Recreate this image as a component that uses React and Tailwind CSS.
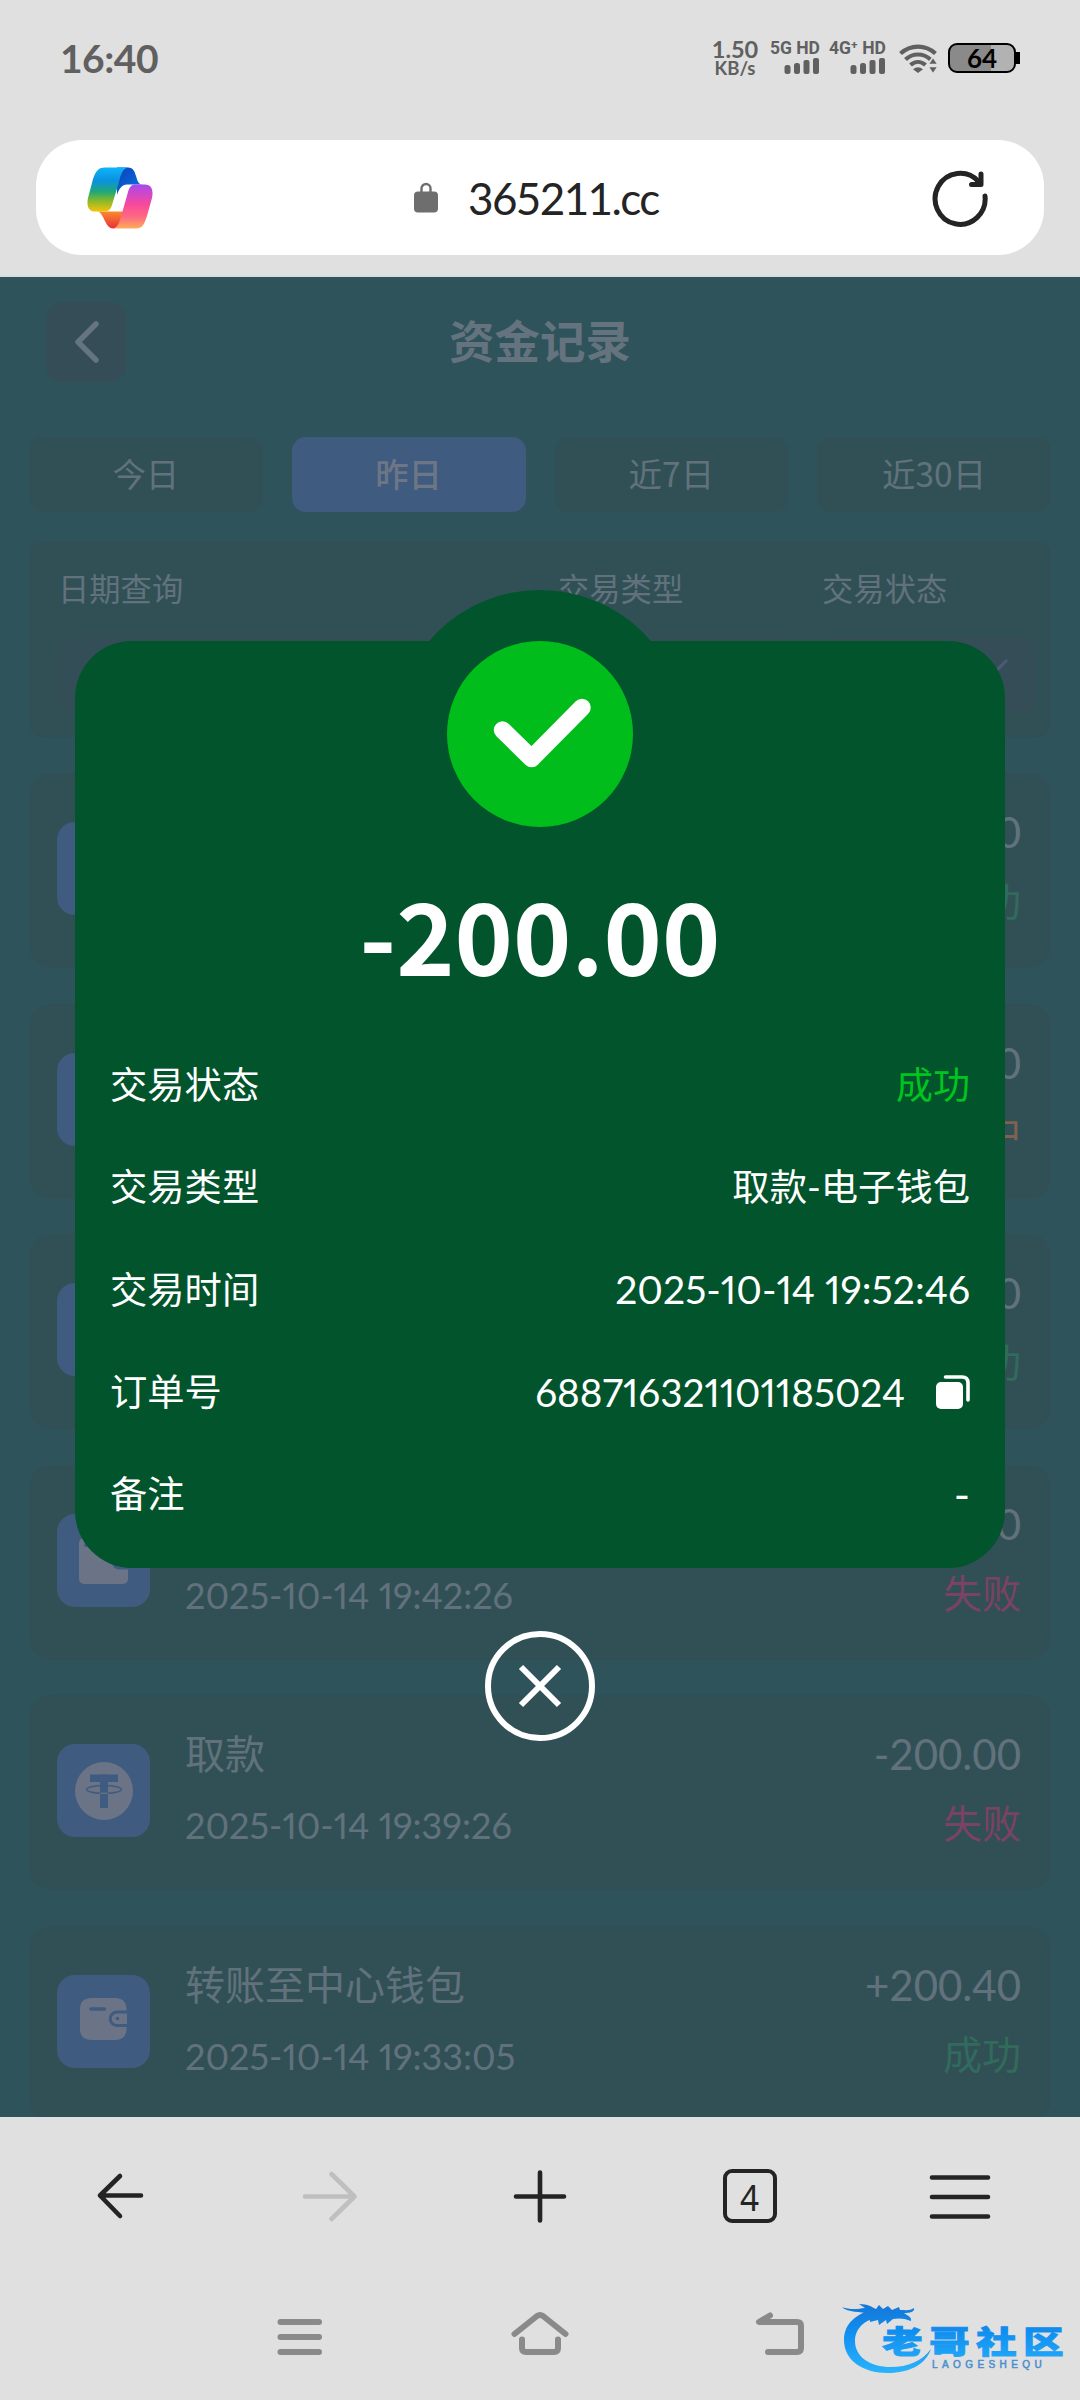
const tabs = [
  { label: '今日', active: false },
  { label: '昨日', active: true },
  { label: '近7日', active: false },
  { label: '近30日', active: false },
];

const records = [
  { id: 1, icon: 'usdt', title: '取款', time: '2025-10-14 19:52:46', amount: '-200.00', status: '成功' },
  { id: 2, icon: 'usdt', title: '取款', time: '2025-10-14 19:49:12', amount: '-200.00', status: '处理中' },
  { id: 3, icon: 'card', title: '转账', time: '2025-10-14 19:45:31', amount: '+200.00', status: '成功' },
  { id: 4, icon: 'card', title: '取款', time: '2025-10-14 19:42:26', amount: '-200.00', status: '失败' },
  { id: 5, icon: 'usdt', title: '取款', time: '2025-10-14 19:39:26', amount: '-200.00', status: '失败' },
  { id: 6, icon: 'wallet', title: '转账至中心钱包', time: '2025-10-14 19:33:05', amount: '+200.40', status: '成功' },
];

const statusColors = {
  成功: 'text-[#316b5c]',
  失败: 'text-[#7a4263]',
  处理中: 'text-[#7d6250]',
};

const details = [
  { label: '交易状态', value: '成功', size: 'text-[37px]', color: 'text-[#00c41f]' },
  { label: '交易类型', value: '取款-电子钱包', size: 'text-[37.3px]' },
  { label: '交易时间', value: '2025-10-14 19:52:46', size: 'text-[39px]' },
  { label: '订单号', value: '688716321101185024', size: 'text-[38.7px]', copy: true },
  { label: '备注', value: '-', size: 'text-[44px]' },
];

const SignalBars = () => (
  <svg className="w-[36px] h-[16px]" viewBox="0 0 36 16" fill="#606060">
    <rect x="0.5" y="7" width="6" height="9" rx="2.5" />
    <rect x="10" y="5" width="6" height="11" rx="2.5" />
    <rect x="19.5" y="2" width="6" height="14" rx="2" />
    <rect x="29" y="0" width="6" height="16" rx="2" />
  </svg>
);

const WifiIcon = () => (
  <svg className="w-[38px] h-[30px] ml-[13px] mt-[43px]" viewBox="0 0 38 30">
    <g fill="none" stroke="#606060" strokeWidth="4.2">
      <path d="M1.5 10.5 C11.5 1.2 26.5 1.2 36.5 10.5" />
      <path d="M6.5 16.5 C13.5 9.8 24.5 9.8 31.5 16.5" />
      <path d="M11.5 22 C16 18 22 18 26.5 22" />
    </g>
    <path d="M14 26.2 Q19 22.5 24 26.2 L19 30 Z" fill="#606060" />
    <path d="M34 14 L39 21.5 H29 Z M34 31 L39 23.5 H29 Z" fill="#606060" stroke="#e0e0e0" strokeWidth="1.5" />
  </svg>
);

const StatusBar = () => (
  <div className="flex items-start h-[140px] text-[#606060]">
    <span className="ml-[60px] mt-[34px] text-[39px] leading-[48px] font-bold tracking-[-0.5px]">16:40</span>
    <div className="ml-auto w-[46px] mt-[38px] flex flex-col items-center font-bold">
      <span className="text-[23.5px] leading-[23px]">1.50</span>
      <span className="text-[18.5px] leading-[15px]">KB/s</span>
    </div>
    <div className="ml-[12px] mt-[38px] w-[50px] flex flex-col items-end">
      <span className="font-['Roboto'] text-[17.5px] leading-[20px] font-bold whitespace-nowrap">5G HD</span>
      <SignalBars />
    </div>
    <div className="ml-[8px] mt-[38px] w-[58px] flex flex-col items-end">
      <span className="font-['Roboto'] text-[17.5px] leading-[20px] font-bold whitespace-nowrap">4G⁺ HD</span>
      <SignalBars />
    </div>
    <WifiIcon />
    <div className="ml-[11px] mt-[43px] mr-[60px] flex items-center">
      <div className="w-[68px] h-[30px] rounded-[9px] border-2 border-black bg-gradient-to-r from-[#8a8a8a] from-64% to-[#b2b2b2] to-64% flex items-center justify-center text-[26px] leading-none font-bold text-black">
        64
      </div>
      <div className="w-[4px] h-[12px] bg-black" />
    </div>
  </div>
);

const CopilotIcon = () => (
  <svg className="w-[66px] h-[62px]" viewBox="0 0 66 62">
    <defs>
      <linearGradient id="cpA" x1="0" y1="0" x2="0" y2="1">
        <stop offset="0" stopColor="#0fb4f8" />
        <stop offset="0.3" stopColor="#0a91e0" />
        <stop offset="0.55" stopColor="#1fa878" />
        <stop offset="0.75" stopColor="#84b92c" />
        <stop offset="1" stopColor="#f5c20a" />
      </linearGradient>
      <linearGradient id="cpB" x1="0" y1="0" x2="0" y2="1">
        <stop offset="0" stopColor="#a848ee" />
        <stop offset="0.45" stopColor="#f8489c" />
        <stop offset="0.75" stopColor="#fd6c80" />
        <stop offset="1" stopColor="#ffad58" />
      </linearGradient>
      <linearGradient id="cpC" x1="0" y1="0" x2="1" y2="1">
        <stop offset="0" stopColor="#0b3fb8" />
        <stop offset="1" stopColor="#0a7ae8" />
      </linearGradient>
      <linearGradient id="cpD" x1="0" y1="0" x2="0" y2="1">
        <stop offset="0" stopColor="#fb8a2c" />
        <stop offset="1" stopColor="#e6303c" />
      </linearGradient>
    </defs>
    <path d="M30 0.5 H41 C46 0.5 47.5 4 49 9 C50.500 14 51.5 17.5 56 17.5 H40 C35 17.5 32 22 30 28 Z" fill="url(#cpC)" />
    <path d="M10 44.500 C17 45 18 61.500 26 61.500 C32 61.500 34 53 37 44.500 Z" fill="url(#cpD)" />
    <path d="M18 0.500 H42 C36 0.500 34 7 32 15 L25 38 C23.500 43 21 44.500 17 44.500 H8 C1 44.500 -0.500 38 1 31 L6 12 C9 3 12 0.500 18 0.500 Z" fill="url(#cpA)" />
    <path d="M49 61.500 H25 C31 61.500 32.500 55 34.500 48 L41 25 C42.500 20 44 17.500 49 17.500 H58 C65 17.500 66.500 24 65 31 L60 49 C57 58 55 61.500 49 61.500 Z" fill="url(#cpB)" />
  </svg>
);

const AddressBar = () => (
  <div className="mx-[36px] h-[115px] shrink-0 rounded-[46px] bg-white flex items-center">
    <div className="ml-[51px]">
      <CopilotIcon />
    </div>
    <svg className="ml-[261px] w-[24px] h-[31px]" viewBox="0 0 24 31">
      <path d="M7.5 12 V6.5 a4.5 4.5 0 0 1 9 0 V12" fill="none" stroke="#6e6e6e" strokeWidth="2.4" />
      <rect x="0" y="9.5" width="24" height="21" rx="4" fill="#6e6e6e" />
    </svg>
    <span className="ml-[30px] text-[44px] leading-none text-[#242424] tracking-[-1.6px]">365211.cc</span>
    <svg className="ml-auto mr-[55px] w-[58px] h-[58px]" viewBox="0 0 58 58" fill="none" stroke="#242424" strokeWidth="5" strokeLinecap="round" strokeLinejoin="round">
      <path d="M54 27 A25 25.5 0 1 1 47.5 12.5" />
      <path d="M50 5 V15.5 H40.5" />
    </svg>
  </div>
);

const RecordIcon = ({ type }) => {
  if (type === 'usdt') {
    return (
      <svg className="w-[60px] h-[60px]" viewBox="0 0 60 60">
        <circle cx="30" cy="30" r="29" fill="#6b7486" />
        <g fill="#3f5b80">
          <rect x="16" y="13.5" width="28" height="7.5" />
          <rect x="26" y="13.5" width="8" height="33.5" />
        </g>
        <ellipse cx="30" cy="28.5" rx="17.5" ry="4" fill="none" stroke="#3f5b80" strokeWidth="1.5" />
        <path d="M26 32.3 H34" stroke="#6b7486" strokeWidth="1.2" />
      </svg>
    );
  }
  if (type === 'card') {
    return (
      <svg className="w-[49px] h-[52px]" viewBox="0 0 49 52">
        <rect x="0" y="4" width="49" height="46" rx="5" fill="#6b7486" />
        <path d="M7 11 H22" stroke="#3f5b80" strokeWidth="4" strokeLinecap="round" />
        <path d="M49 23 H40 a5.5 5.500 0 0 0 0 11 H49" fill="#6b7486" stroke="#3f5b80" strokeWidth="3" />
      </svg>
    );
  }
  return (
    <svg className="w-[47px] h-[42px] mb-[4px]" viewBox="0 0 47 42">
      <path d="M12 0 H35 Q46 0 46.5 11 V31 Q46 42 35 42 H12 Q0 42 0 31 V11 Q0 0 12 0 Z" fill="#6b7486" />
      <path d="M11 11 H24.5" stroke="#3f5b80" strokeWidth="3.5" strokeLinecap="round" />
      <path d="M47 14 H37 a6.5 6.5 0 0 0 0 13.500 H47" fill="#6b7486" stroke="#3f5b80" strokeWidth="3" />
      <circle cx="37.5" cy="20.5" r="1.8" fill="#3f5b80" />
    </svg>
  );
};

const RecordCard = ({ record }) => (
  <div className="h-[195px] shrink-0 rounded-[22px] bg-[#315055] px-[28px] flex text-[#61727d]">
    <div className="mt-[49px] w-[93px] h-[93px] rounded-[18px] bg-[#3f5b80] flex items-center justify-center">
      <RecordIcon type={record.icon} />
    </div>
    <div className="ml-[35px] pt-[29px]">
      <div className="text-[40px] leading-[60px]">{record.title}</div>
      <div className="mt-[11px] text-[36px] leading-[60px] proportional-nums">{record.time}</div>
    </div>
    <div className="ml-auto pt-[29px] mr-[2px] text-right">
      <div className="text-[42px] leading-[60px]">{record.amount}</div>
      <div className={`mt-[9px] text-[39px] leading-[60px] ${statusColors[record.status]}`}>{record.status}</div>
    </div>
  </div>
);

const DetailModal = () => (
  <div className="absolute inset-0 flex flex-col items-center pt-[364px] text-white">
    <div className="relative w-[930px] h-[927px] rounded-[57px] bg-[#01542b]">
      <div className="absolute left-1/2 -translate-x-1/2 top-[-51px] w-[292px] h-[292px] rounded-full bg-[#01542b]" />
      <div className="relative flex flex-col items-center">
        <svg className="w-[186px] h-[186px]" viewBox="0 0 186 186">
          <circle cx="93" cy="93" r="93" fill="#00bd1c" />
          <path d="M55.5 89 L84.6 117.5 L135 66.5" fill="none" stroke="#fff" strokeWidth="17.5" strokeLinecap="round" strokeLinejoin="round" />
        </svg>
        <div className="mt-[31px] h-[150px] font-['Noto_Sans_CJK_SC'] text-[99px] leading-[150px] font-bold">-200.00</div>
      </div>
      <div className="relative mt-[26px] px-[35px]">
        {details.map((row) => (
          <div key={row.label} className="h-[102.2px] flex items-center justify-between text-[37.3px]">
            <span>{row.label}</span>
            <span className={`flex items-center proportional-nums ${row.size} ${row.color || ''}`}>
              {row.value}
              {row.copy && (
                <svg className="ml-[31px] w-[34px] h-[34px]" viewBox="0 0 34 34">
                  <rect x="0" y="7" width="27" height="27" rx="5" fill="#fff" />
                  <path d="M9.5 2 H26 Q32 2 32 8 V25" fill="none" stroke="#fff" strokeWidth="3.6" strokeLinecap="round" />
                </svg>
              )}
            </span>
          </div>
        ))}
      </div>
    </div>
    <svg className="mt-[62px] w-[112px] h-[112px]" viewBox="0 0 112 112" fill="none" stroke="#fff" strokeWidth="6">
      <circle cx="56" cy="56" r="52" />
      <path d="M37 37 L75 75 M75 37 L37 75" />
    </svg>
  </div>
);

const FundsPage = () => (
  <div className="relative h-[1840px] shrink-0 overflow-hidden bg-[#2f535b] text-[#61727d]">
    <div className="relative h-[160px] flex items-start">
      <div className="ml-[46px] mt-[25px] w-[80px] h-[80px] rounded-[16px] bg-[#354d57] flex items-center justify-center">
        <svg className="w-[26px] h-[44px]" viewBox="0 0 26 44" fill="none" stroke="#65757f" strokeWidth="5.5" strokeLinecap="round" strokeLinejoin="round">
          <path d="M23 4 L5 22 L23 40" />
        </svg>
      </div>
      <h1 className="w-[828px] pt-[33px] text-center text-[45.5px] leading-[64px] font-bold text-[#65737f]">资金记录</h1>
    </div>

    {/* Quick date tabs */}
    <div className="px-[29px] grid grid-cols-4 gap-[29px] font-['Noto_Sans_CJK_SC']">
      {tabs.map((tab) => (
        <div
          key={tab.label}
          className={`h-[75px] pb-[3px] rounded-[14px] flex items-center justify-center text-[33.5px] leading-none ${
            tab.active ? 'bg-[#3f5b80] text-[#6d7684] font-medium' : 'bg-[#315055]'
          }`}
        >
          {tab.label}
        </div>
      ))}
    </div>

    {/* Filters */}
    <div className="mx-[29px] mt-[29px] h-[196px] rounded-[14px] bg-[#315055] pl-[29px] pr-[16px] pt-[26px] text-[31.3px] leading-[44px]">
      <div className="flex">
        <span className="w-[500px]">日期查询</span>
        <span className="w-[264px]">交易类型</span>
        <span>交易状态</span>
      </div>
      <div className="mt-[26px] flex gap-[20px]">
        <div className="w-[480px] h-[76px] rounded-[14px] bg-[#334e57]" />
        <div className="w-[244px] h-[76px] rounded-[14px] bg-[#334e57]" />
        <div className="flex-1 h-[76px] rounded-[14px] bg-[#354d57] flex items-center justify-end pr-[27px]">
          <svg className="w-[24px] h-[14px] mb-[18px]" viewBox="0 0 24 14" fill="none" stroke="#4d5a75" strokeWidth="3">
            <path d="M1 1 L12 12 L23 1" />
          </svg>
        </div>
      </div>
    </div>

    <div className="mx-[29px] mt-[36px] flex flex-col gap-[35.5px]">
      {records.map((record) => (
        <RecordCard key={record.id} record={record} />
      ))}
    </div>

    <DetailModal />
  </div>
);

const BrowserToolbar = () => (
  <div className="h-[158px] px-[15px] grid grid-cols-5 justify-items-center items-center text-[#242424]">
    <svg className="w-[60px] h-[60px]" viewBox="0 0 60 60" fill="none" stroke="currentColor" strokeWidth="4.6" strokeLinecap="round" strokeLinejoin="round">
      <path d="M51 29.500 H10 M30 10 L10 29.500 L30 50" />
    </svg>
    <svg className="w-[60px] h-[60px]" viewBox="0 0 60 60" fill="none" stroke="#bfbfbf" strokeWidth="4.6" strokeLinecap="round" strokeLinejoin="round">
      <path d="M5 30.5 H54.5 M31.5 8 L54.5 30.5 L31.5 53" />
    </svg>
    <svg className="w-[60px] h-[60px]" viewBox="0 0 60 60" fill="none" stroke="currentColor" strokeWidth="4.6" strokeLinecap="round">
      <path d="M6 30.5 H54 M30 6.5 V54.5" />
    </svg>
    <div className="w-[54px] h-[54px] rounded-[9px] border-[4.6px] border-[#242424] flex items-center justify-center font-['Noto_Sans'] text-[37px] leading-none">
      <span className="scale-x-90">4</span>
    </div>
    <svg className="w-[64px] h-[60px]" viewBox="0 0 64 60" fill="none" stroke="currentColor" strokeWidth="4.6" strokeLinecap="round">
      <path d="M4 11.5 H60 M4 31 H60 M4 50.5 H60" />
    </svg>
  </div>
);

const SiteLogo = () => (
  <svg className="absolute left-[838px] top-[2300px] w-[232px] h-[80px]" viewBox="0 0 232 80">
    <defs>
      <linearGradient id="logoBlue" gradientUnits="userSpaceOnUse" x1="0" y1="5" x2="0" y2="74">
        <stop offset="0" stopColor="#1577d8" />
        <stop offset="0.4" stopColor="#108ff0" />
        <stop offset="1" stopColor="#2bb4fb" />
      </linearGradient>
    </defs>
    <g fill="url(#logoBlue)">
      <path d="M40 9 C18 12 6 24 6 40 C6 60 24 73 50 73 C72 73 88 64 93 49 C84 61 70 67 53 67 C32 67 17 57 17 41 C17 29 26 19 43 17 Z" />
      <path d="M4 7 C12 10 20 9 27 8 L21 4 C30 4 34 7 38 9 L41 5 L45 9 L50 6 L54 10 L61 7 L62 10 C68 10 72 11 76 8 C77 12 72 13 66 13 C70 16 74 17 73 21 C66 18 60 18 55 19 L49 24 L48 20 L41 25 L40 20 L32 22 L31 14 C22 11 10 13 4 7 Z" />
      <text transform="scale(1.3 1)" x="34" y="53" fontFamily="Noto Sans CJK SC" fontWeight="900" fontSize="31" letterSpacing="5.2" stroke="url(#logoBlue)" strokeWidth="1">
        老哥社区
      </text>
    </g>
    <text x="94" y="68" fontFamily="Liberation Sans" fontSize="10" letterSpacing="4.4" fill="#4a8fd0" stroke="#4a8fd0" strokeWidth="0.5">
      LAOGESHEQU
    </text>
  </svg>
);

const SystemNav = () => (
  <div className="h-[125px] flex items-start pt-[32px] pl-[270px]">
    <svg className="w-[60px] h-[60px]" viewBox="0 0 60 60" fill="none" stroke="#8a8a8a" strokeWidth="6" strokeLinecap="round">
      <path d="M10.5 15 H49 M10.5 30 H49 M10.5 45 H49" />
    </svg>
    <svg className="ml-[180px] w-[60px] h-[60px]" viewBox="0 0 60 60" fill="none" stroke="#8a8a8a" strokeWidth="6" strokeLinecap="round" strokeLinejoin="round">
      <path d="M4.5 27 L27 9 Q30 7 33 9 L55.5 27" />
      <path d="M12 32.5 V41 Q12 45 16 45 H44 Q48 45 48 41 V32.5" />
    </svg>
    <svg className="ml-[180px] w-[60px] h-[60px]" viewBox="0 0 60 60" fill="none" stroke="#8a8a8a" strokeWidth="6" strokeLinecap="round" strokeLinejoin="round">
      <path d="M20 8.5 L9 15 H47 Q51 15 51 19 V41 Q51 45 47 45 H18" />
    </svg>
  </div>
);

const App = () => {
  return (
    <div className="relative w-[1080px] h-[2400px] overflow-hidden bg-[#e0e0e0] flex flex-col font-['Lato','Noto_Sans_CJK_SC',sans-serif]">
      <div className="h-[277px] shrink-0 border-b-2 border-[#d3dfe0]">
        <StatusBar />
        <AddressBar />
      </div>
      <FundsPage />
      <BrowserToolbar />
      <SystemNav />
      <SiteLogo />
    </div>
  );
};

export default App;
